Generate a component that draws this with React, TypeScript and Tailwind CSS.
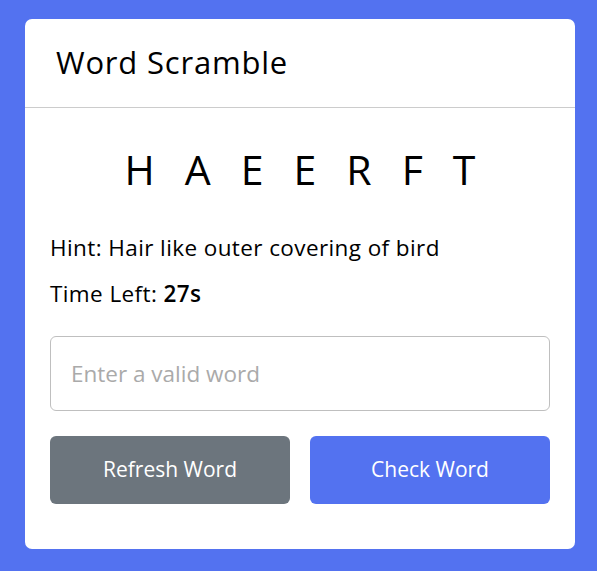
export default function App() {
  const font = { fontFamily: '"Open Sans", "Noto Sans", sans-serif' };
  return (
    <div className="w-[597px] h-[571px] bg-[#5372F0] pl-[25px] pt-[19px]" style={font}>
      <div className="w-[550px] bg-white rounded-[7px] text-black">
        <h2 className="text-[31px] leading-[1.5] font-medium tracking-[0.8px] px-[31px] pt-[20px] pb-[21px] border-b border-[#ccc]">
          Word Scramble
        </h2>
        <div className="px-[25px] pt-[31px] pb-[45px]">
          <p className="text-[41px] leading-[1.5] font-medium text-center tracking-[30px] mr-[-30px]">
            HAEERFT
          </p>
          <div className="mt-[31px] mb-[25px] text-[22.5px] leading-[1.5] tracking-[0.4px]">
            <p className="mb-[12px]">Hint: <span>Hair like outer covering of bird</span></p>
            <p>Time Left: <b className="font-semibold">27s</b></p>
          </div>
          <input
            className="w-full h-[75px] rounded-[6px] border border-[#bfbfbf] px-[20px] text-[22.5px] outline-none placeholder:text-[#aaa]"
            placeholder="Enter a valid word"
            style={font}
          />
          <div className="flex gap-[20px] mt-[25px]">
            <button className="flex-1 h-[68px] rounded-[6px] bg-[#6C757D] text-white text-[21px]" style={font}>
              Refresh Word
            </button>
            <button className="flex-1 h-[68px] rounded-[6px] bg-[#5372F0] text-white text-[21px]" style={font}>
              Check Word
            </button>
          </div>
        </div>
      </div>
    </div>
  );
}
